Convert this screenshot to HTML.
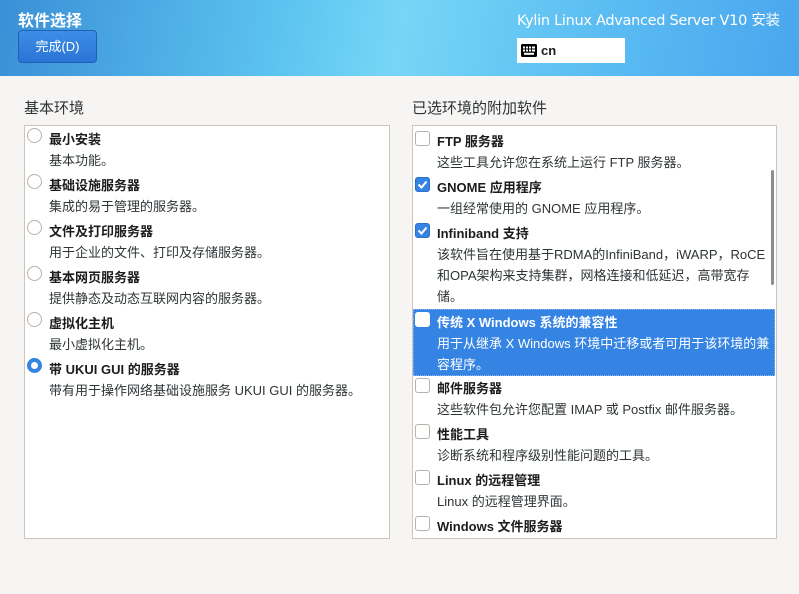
<!DOCTYPE html>
<html><head><meta charset="utf-8"><style>
*{margin:0;padding:0;box-sizing:border-box}
body{width:799px;height:594px;overflow:hidden;background:#f6f5f4;font-family:"Liberation Sans","Noto Sans CJK SC",sans-serif;font-size:13px;color:#2e3436;position:relative}
.hdr{position:absolute;left:0;top:0;width:799px;height:76px;background:linear-gradient(100deg,#3a8fd6 0%,#5cc3f0 35%,#76d6f6 50%,#5bbcf2 75%,#4aa6ee 100%)}
.t{position:absolute;white-space:nowrap}
.btn{position:absolute;left:18px;top:30px;width:79px;height:33px;border-radius:4px;background:linear-gradient(#3d8ee6,#2a74d6);border:1px solid #1f5fb4;color:#fff;font-size:13px;text-align:center;line-height:31px}
.kb{position:absolute;left:517px;top:38px;width:108px;height:25px;background:#fff}
.box{position:absolute;top:125px;height:414px;background:#fff;border:1px solid #c9c5c0}
.b{font-weight:bold;color:#1c1c1c}
.radio{position:absolute;width:15px;height:15px;border-radius:50%;border:1px solid #b8b2ab;background:#fff}
.cb{position:absolute;width:15px;height:15px;border-radius:3px;border:1px solid #b8b2ab;background:#fff}
.cbon{background:#3584e4;border-color:#2a6fc9}
</style></head><body>
<div class="hdr"></div>
<div class="t" style="left:18px;top:7px;font-size:16px;font-weight:bold;color:#fff">软件选择</div>
<div class="btn">完成(D)</div>
<div class="t" style="left:517px;top:9px;font-size:14.5px;color:#fff;font-family:'DejaVu Sans','Noto Sans CJK SC',sans-serif;letter-spacing:-0.3px">Kylin Linux Advanced Server V10 安装</div>
<div class="kb"><svg style="position:absolute;left:4px;top:6px" width="16" height="13" viewBox="0 0 16 13"><rect x="0" y="0" width="16" height="13" rx="1.5" fill="#000"/><g fill="#fff"><rect x="2" y="2.5" width="2" height="2"/><rect x="5" y="2.5" width="2" height="2"/><rect x="8" y="2.5" width="2" height="2"/><rect x="11" y="2.5" width="3" height="2"/><rect x="2" y="5.5" width="2" height="2"/><rect x="5" y="5.5" width="2" height="2"/><rect x="8" y="5.5" width="2" height="2"/><rect x="11" y="5.5" width="3" height="2"/><rect x="3" y="8.8" width="10" height="2"/></g></svg><span class="t b" style="left:24px;top:5px;font-size:13px">cn</span></div>

<div class="t" style="left:24px;top:97px;font-size:15px;color:#2e3436">基本环境</div>
<div class="t" style="left:412px;top:97px;font-size:15px;color:#2e3436">已选环境的附加软件</div>

<div class="box" style="left:24px;width:366px"></div>
<div class="box" style="left:412px;width:365px"></div>

<div class="radio" style="left:27px;top:128px"></div>
<div class="t b" style="left:49px;top:129px">最小安装</div><div class="t" style="left:49px;top:150px">基本功能。</div>
<div class="radio" style="left:27px;top:174px"></div>
<div class="t b" style="left:49px;top:175px">基础设施服务器</div><div class="t" style="left:49px;top:196px">集成的易于管理的服务器。</div>
<div class="radio" style="left:27px;top:220px"></div>
<div class="t b" style="left:49px;top:221px">文件及打印服务器</div><div class="t" style="left:49px;top:242px">用于企业的文件、打印及存储服务器。</div>
<div class="radio" style="left:27px;top:266px"></div>
<div class="t b" style="left:49px;top:267px">基本网页服务器</div><div class="t" style="left:49px;top:288px">提供静态及动态互联网内容的服务器。</div>
<div class="radio" style="left:27px;top:312px"></div>
<div class="t b" style="left:49px;top:313px">虚拟化主机</div><div class="t" style="left:49px;top:334px">最小虚拟化主机。</div>
<div class="radio" style="left:27px;top:358px;border:4px solid #3584e4"></div>
<div class="t b" style="left:49px;top:359px">带 UKUI GUI 的服务器</div><div class="t" style="left:49px;top:380px">带有用于操作网络基础设施服务 UKUI GUI 的服务器。</div>

<div style="position:absolute;left:771px;top:170px;width:3px;height:115px;background:#8e8e8e;border-radius:2px"></div>
<div class="cb" style="left:415px;top:131px"></div>
<div class="t b" style="left:437px;top:131px">FTP 服务器</div><div class="t" style="left:437px;top:152px">这些工具允许您在系统上运行 FTP 服务器。</div>
<div class="cb cbon" style="left:415px;top:177px"><svg width="13" height="13" viewBox="0 0 13 13"><path d="M2.5 6.5l3 3 5-6" stroke="#fff" stroke-width="2" fill="none"/></svg></div>
<div class="t b" style="left:437px;top:177px">GNOME 应用程序</div><div class="t" style="left:437px;top:198px">一组经常使用的 GNOME 应用程序。</div>
<div class="cb cbon" style="left:415px;top:223px"><svg width="13" height="13" viewBox="0 0 13 13"><path d="M2.5 6.5l3 3 5-6" stroke="#fff" stroke-width="2" fill="none"/></svg></div>
<div class="t b" style="left:437px;top:223px">Infiniband 支持</div>
<div class="t" style="left:437px;top:244px;line-height:21px;white-space:normal;width:332px">该软件旨在使用基于RDMA的InfiniBand，iWARP，RoCE和OPA架构来支持集群，网格连接和低延迟，高带宽存储。</div>
<div style="position:absolute;left:413px;top:309px;width:362px;height:67px;background:#3584e4;border:1px dotted #8ab7ef"></div>
<div class="cb" style="left:415px;top:312px;border-color:#fff"></div>
<div class="t b" style="left:437px;top:312px;color:#fff">传统 X Windows 系统的兼容性</div>
<div class="t" style="left:437px;top:333px;color:#fff;line-height:21px">用于从继承 X Windows 环境中迁移或者可用于该环境的兼<br>容程序。</div>
<div class="cb" style="left:415px;top:378px"></div>
<div class="t b" style="left:437px;top:378px">邮件服务器</div><div class="t" style="left:437px;top:399px">这些软件包允许您配置 IMAP 或 Postfix 邮件服务器。</div>
<div class="cb" style="left:415px;top:424px"></div>
<div class="t b" style="left:437px;top:424px">性能工具</div><div class="t" style="left:437px;top:445px">诊断系统和程序级别性能问题的工具。</div>
<div class="cb" style="left:415px;top:470px"></div>
<div class="t b" style="left:437px;top:470px">Linux 的远程管理</div><div class="t" style="left:437px;top:491px">Linux 的远程管理界面。</div>
<div class="cb" style="left:415px;top:516px"></div>
<div class="t b" style="left:437px;top:516px">Windows 文件服务器</div>
</body></html>
